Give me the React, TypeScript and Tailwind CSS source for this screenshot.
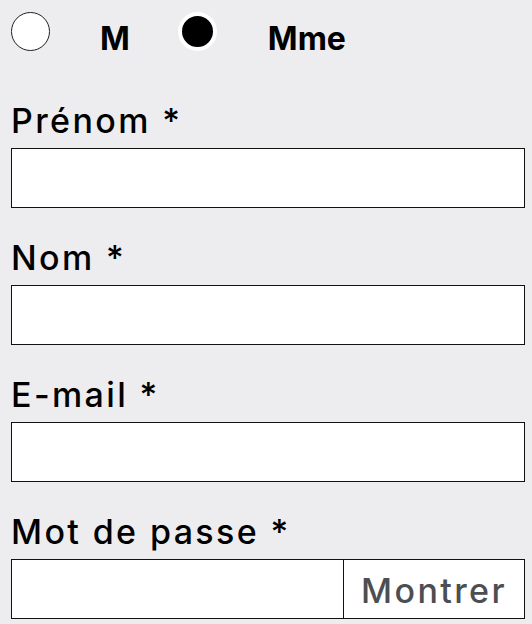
import { useState } from 'react';

const font = { fontFamily: 'Inter, "Noto Sans", sans-serif' };

function Field({ label, type = 'text' }: { label: string; type?: string }) {
  return (
    <div className="mb-[30px] last:mb-0">
      <label className="block text-[34px] leading-[40px] font-medium tracking-[0.07em] text-black">
        {label} *
      </label>
      <input
        type={type}
        className="mt-[7px] block h-[60px] w-full border border-[#111] bg-white px-3 text-[24px] outline-none"
      />
    </div>
  );
}

export default function App() {
  const [civ, setCiv] = useState<'M' | 'Mme'>('Mme');
  const [show, setShow] = useState(false);

  return (
    <div className="min-h-screen bg-[#ededef] pl-[11px] pr-[7px] pt-[12px]" style={font}>
      {/* civilité */}
      <div className="flex items-start">
        <button
          onClick={() => setCiv('M')}
          className={
            civ === 'M'
              ? 'h-[39px] w-[39px] rounded-full border-[4.5px] border-white bg-black'
              : 'h-[39px] w-[39px] rounded-full border border-[#222] bg-white'
          }
        />
        <span className="ml-[50px] mt-[7px] text-[32px] leading-[39px] font-bold">M</span>
        <button
          onClick={() => setCiv('Mme')}
          className={
            civ === 'Mme'
              ? 'ml-[48px] h-[39px] w-[39px] rounded-full border-[4.5px] border-white bg-black'
              : 'ml-[48px] h-[39px] w-[39px] rounded-full border border-[#222] bg-white'
          }
        />
        <span className="ml-[51px] mt-[7px] text-[32px] leading-[39px] font-bold">Mme</span>
      </div>

      <div className="mt-[43px]">
        <Field label="Prénom" />
        <Field label="Nom" />
        <Field label="E-mail" type="email" />
        <div>
          <label className="block text-[34px] leading-[40px] font-medium tracking-[0.07em] text-black">
            Mot de passe *
          </label>
          <div className="mt-[7px] flex h-[60px] w-full border border-[#111] bg-white">
            <input
              type={show ? 'text' : 'password'}
              className="min-w-0 flex-1 px-3 text-[24px] outline-none"
            />
            <button
              onClick={() => setShow(!show)}
              className="w-[181px] border-l border-[#111] pt-[2px] text-center text-[34px] font-medium tracking-[0.07em] text-[#4b4e53]"
            >
              Montrer
            </button>
          </div>
        </div>
      </div>
    </div>
  );
}
